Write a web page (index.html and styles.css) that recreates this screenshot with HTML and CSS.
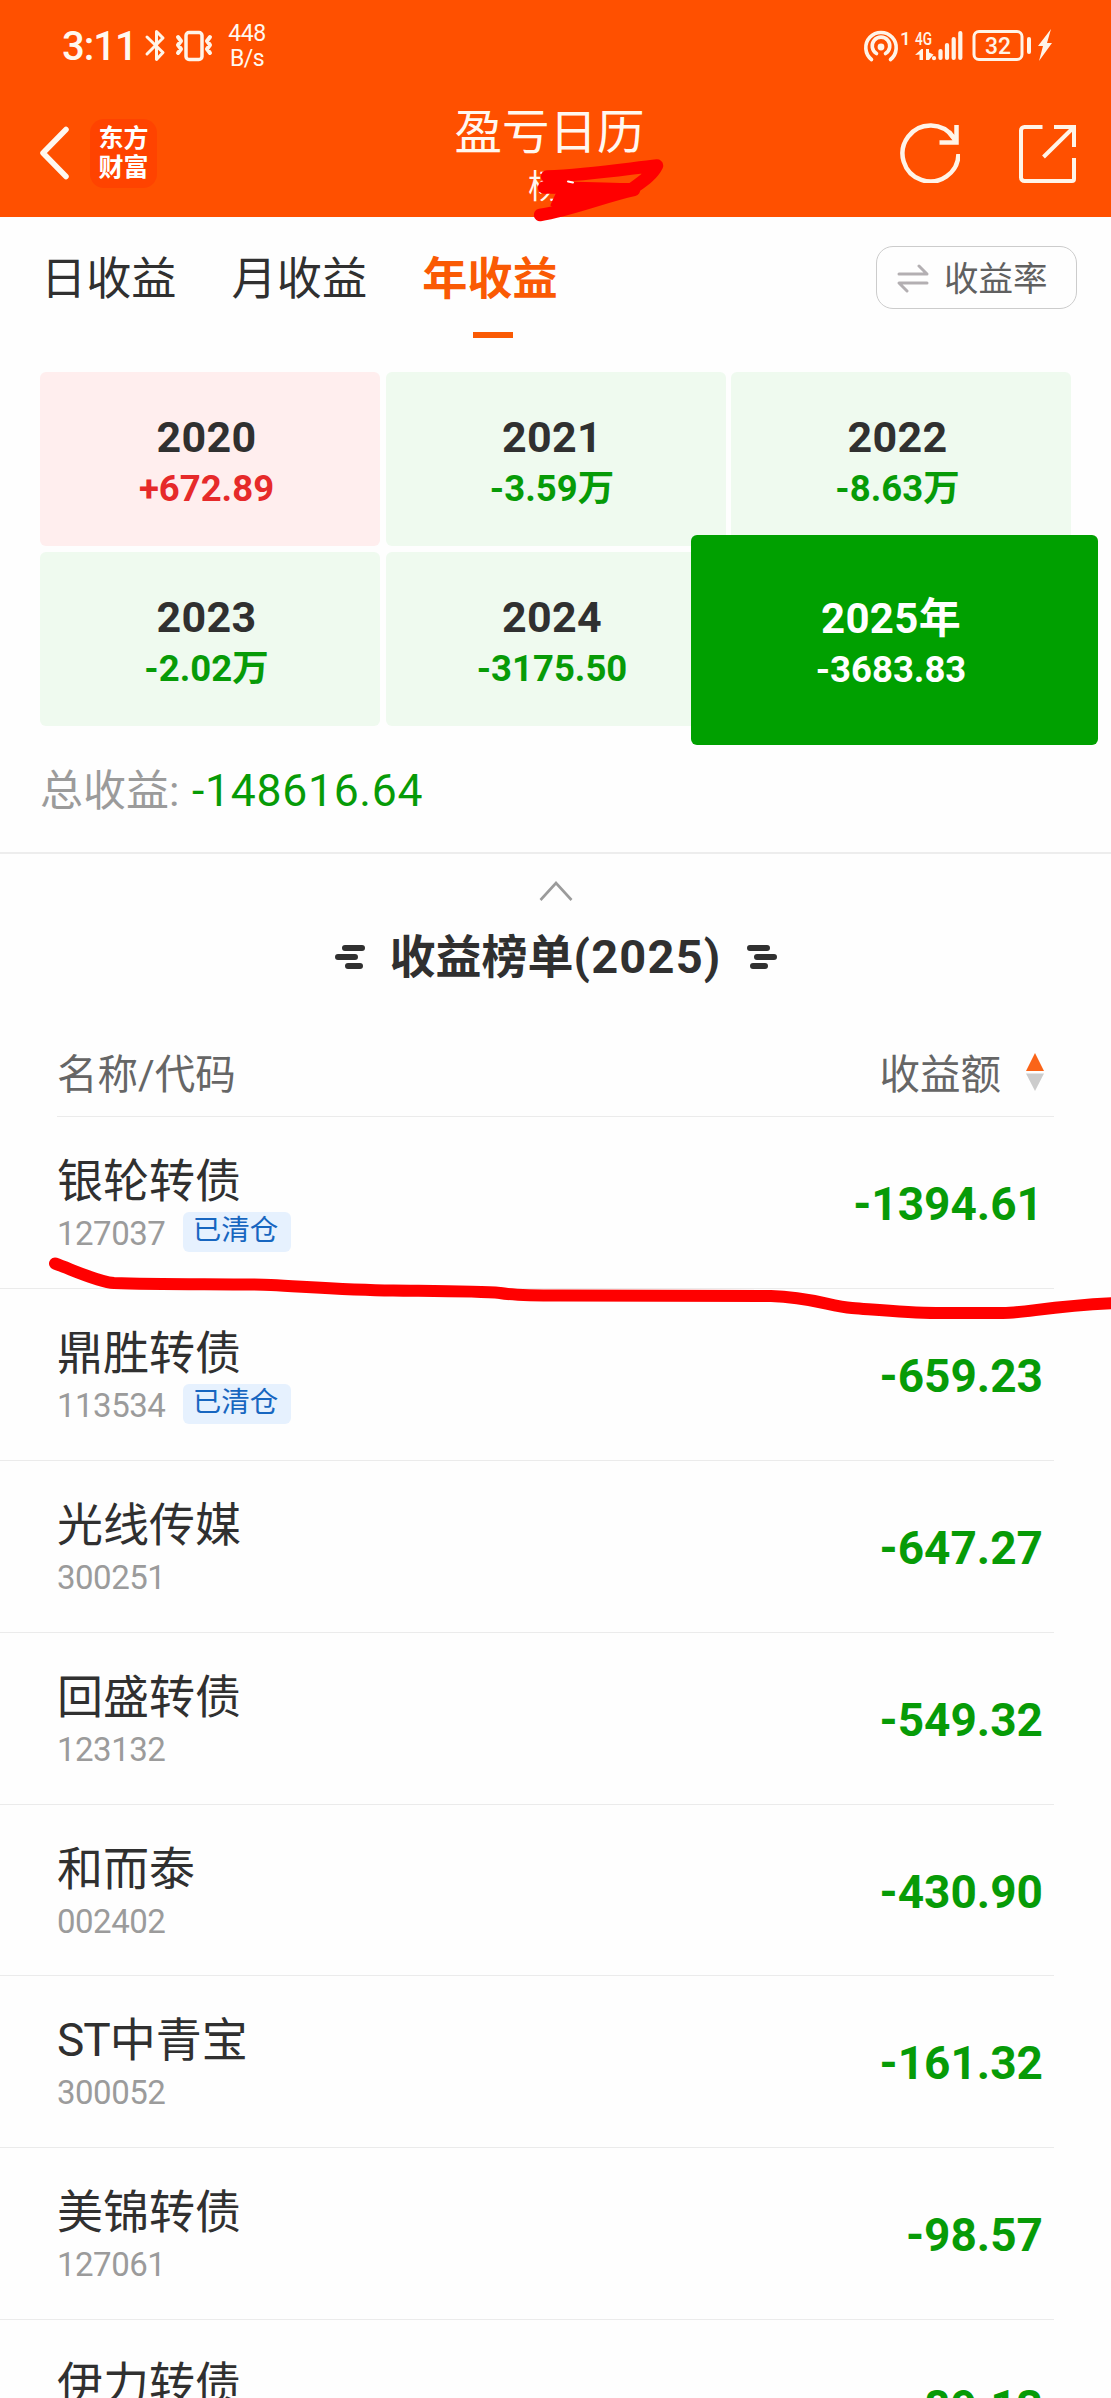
FILE: index.html
```html
<!DOCTYPE html>
<html lang="zh-CN">
<head>
<meta charset="utf-8">
<title>盈亏日历</title>
<link rel="stylesheet" href="styles.css">
</head>
<body>
<header class="top">
  <div class="status">
    <span class="clock">3:11</span>
    <svg class="status-left" width="70" height="34" viewBox="0 0 70 34" fill="none" stroke="#fff4e8" stroke-linecap="round" stroke-linejoin="round">
      <path d="M3 8 19 23.500 12.500 30.500V2.500L19 9 3 25" stroke-width="3"/>
      <rect x="42" y="3.500" width="16" height="27" rx="3" stroke-width="3.500"/>
      <path d="m34 8 3 4-3 4 3 4-3 4M66 8l-3 4 3 4-3 4 3 4" stroke-width="4"/>
    </svg>
    <span class="speed">448<br>B/s</span>
    <svg class="status-right" width="192" height="36" viewBox="0 0 192 36" fill="none" stroke="#fff4e8">
      <path d="M-2.500 31.500a15.200 15.200 0 1 1 19 0M2.500 25.500a8.800 8.800 0 1 1 9 0" stroke-width="3.600" stroke-linecap="round" transform="translate(10)"/>
      <circle cx="17" cy="19" r="3.400" fill="#fff4e8" stroke="none"/>
      <path d="M51 27l6.500-6H59v11h-3.500v-5.500zM62 21h3v3.500l4.500 2L65 32h-3z" fill="#fff4e8" stroke="none"/>
      <g stroke-width="4.200" stroke-linecap="round"><path d="M70 30v.2M76.500 23v7M83 17v13M89.700 11v19M96.300 5v25"/></g>
      <rect x="110" y="3.500" width="48" height="28" rx="5" stroke-width="3"/>
      <path d="M165 11v13" stroke-width="4" stroke-linecap="round"/>
      <path d="M187 1 174 18h5l-4 15 13-18h-5z" fill="#fff4e8" stroke="none"/>
      <g fill="#fff4e8" stroke="none" class="svg-text">
        <text x="36" y="16.500" font-size="19">1</text>
        <text x="51" y="16.500" font-size="19" textLength="17" lengthAdjust="spacingAndGlyphs">4G</text>
        <text x="121" y="26" font-size="24" textLength="26" lengthAdjust="spacingAndGlyphs">32</text>
      </g>
    </svg>
  </div>
  <div class="nav">
    <div class="nav-side">
      <svg width="30" height="54" viewBox="0 0 30 54" fill="none" stroke="#fff8f0" stroke-width="5.500" stroke-linejoin="round" stroke-linecap="round"><path d="M27 3.500 4 27l23 23.500"/></svg>
      <div class="logo">东方<br>财富</div>
    </div>
    <div class="nav-title"><h1>盈亏日历</h1><span class="owner">杨</span></div>
    <div class="nav-side nav-actions">
      <svg width="60" height="60" viewBox="0 0 60 60" fill="none" stroke="#fff4e8" stroke-width="4.500"><path d="M58.500 31a28 28 0 1 1-5-16.500"/><path d="M56.500 2v17.500H39.500M56 18 49 9"/></svg>
      <svg width="58" height="60" viewBox="0 0 58 60" fill="none" stroke="#fff4e8" stroke-width="4"><path d="M23.500 4H5.500a3.500 3.500 0 0 0-3.500 3.500v47A3.500 3.500 0 0 0 5.500 58H53a2 2 0 0 0 2-2V35M35 4h20v20M55 4 24.500 34"/></svg>
    </div>
  </div>
</header>

<section class="summary">
  <div class="tabs">
    <span class="tab">日收益</span><span class="tab">月收益</span><span class="tab active">年收益</span>
    <button class="toggle"><svg width="32" height="30" viewBox="0 0 32 30" fill="none" stroke="#b3afb2" stroke-width="3" stroke-linecap="round" stroke-linejoin="round"><path d="M2 11h28l-8-8M30 20H2l8 8"/></svg><span>收益率</span></button>
  </div>
  <div class="years">
    <div class="year gain"><b>2020</b><i>+672.89</i></div>
    <div class="year"><b>2021</b><i>-3.59万</i></div>
    <div class="year"><b>2022</b><i>-8.63万</i></div>
    <div class="year"><b>2023</b><i>-2.02万</i></div>
    <div class="year"><b>2024</b><i>-3175.50</i></div>
    <div class="year current"><b>2025年</b><i>-3683.83</i></div>
  </div>
  <div class="total">总收益: <span>-148616.64</span></div>
</section>

<section class="ranking">
  <svg class="collapse" width="34" height="22" viewBox="0 0 34 22" fill="none" stroke="#9b9b9b" stroke-width="2.600"><path d="M1.500 20 17 3l15.500 17"/></svg>
  <div class="rank-title">
    <svg width="32" height="24" viewBox="0 0 32 24" stroke="#303030" stroke-width="6" stroke-linecap="round"><path d="M11 3h17M4 12h17M14 21h12"/></svg>
    <h2>收益榜单<span>(2025)</span></h2>
    <svg width="32" height="24" viewBox="0 0 32 24" stroke="#303030" stroke-width="6" stroke-linecap="round"><path d="M4 3h17M11 12h17M7 21h12"/></svg>
  </div>
  <div class="columns"><span>名称/代码</span><span class="sort">收益额<svg width="18" height="38" viewBox="0 0 18 38"><path d="M9 0l9 18H0z" fill="#fa6418"/><path d="M0 20.500h18L9 38z" fill="#ccc"/></svg></span></div>
  <div class="rows">
    <div class="row"><div><p class="name">银轮转债</p><p class="code"><span>127037</span><em>已清仓</em></p></div><span class="amount">-1394.61</span></div>
    <div class="row"><div><p class="name">鼎胜转债</p><p class="code"><span>113534</span><em>已清仓</em></p></div><span class="amount">-659.23</span></div>
    <div class="row"><div><p class="name">光线传媒</p><p class="code"><span>300251</span></p></div><span class="amount">-647.27</span></div>
    <div class="row"><div><p class="name">回盛转债</p><p class="code"><span>123132</span></p></div><span class="amount">-549.32</span></div>
    <div class="row"><div><p class="name">和而泰</p><p class="code"><span>002402</span></p></div><span class="amount">-430.90</span></div>
    <div class="row"><div><p class="name"><span class="latin">ST</span>中青宝</p><p class="code"><span>300052</span></p></div><span class="amount">-161.32</span></div>
    <div class="row"><div><p class="name">美锦转债</p><p class="code"><span>127061</span></p></div><span class="amount">-98.57</span></div>
    <div class="row"><div><p class="name">伊力转债</p></div><span class="amount">-89.13</span></div>
  </div>
</section>

<svg class="marks" width="1111" height="2398" viewBox="0 0 1111 2398" fill="none" stroke="#f00" stroke-linecap="round" stroke-linejoin="round">
  <path d="M547 176.500C590 175 632 168 657 165.500C652 176 640 183 632 189C600 190 575 187 544 187.500M634 190C602 197 572 210 540 215" stroke-width="12.500"/>
  <path d="M560 187 634 190 560 209 552 205z" fill="#f00" stroke-width="3"/>
  <path d="M568 181.500l5 1" stroke="#fff" stroke-width="2"/>
  <path d="M55 1263.500C73 1270 98 1282 114 1283C165 1285 235 1283.500 271 1285C310 1287 350 1290 393 1290.500C430 1291 480 1291 500 1293C515 1295.500 540 1295.500 560 1295.500L771 1296C810 1297 830 1306 852 1308C890 1311 910 1313 936 1313H1003C1025 1313 1050 1306 1115 1303" stroke-width="12"/>
</svg>
</body>
</html>
```

FILE: styles.css
```css
* { box-sizing: border-box; margin: 0; padding: 0; }
body {
  position: relative;
  width: 1111px;
  height: 2398px;
  overflow: hidden;
  background: #fefefe;
  color: #303030;
  font-family: Roboto, "Noto Sans CJK SC", sans-serif;
}
svg { display: block; flex: none; }

.top { height: 217px; background: #ff5000; color: #fff8f0; }
.status { display: flex; height: 92px; padding: 0 55px 0 62px; align-items: center; }
.clock { width: 82px; font-size: 40px; font-weight: 500; letter-spacing: -1px; }
.speed { margin-left: 10px; width: 46px; text-align: center; font-size: 23px; line-height: 25px; letter-spacing: -.5px; }
.status-right { margin-left: auto; overflow: visible; }
.svg-text { font-weight: 500; }
.nav { display: flex; height: 125px; padding: 0 34px 0 39px; justify-content: space-between; }
.nav-side { display: flex; width: 260px; height: 122px; align-items: center; gap: 21px; }
.nav-actions { justify-content: flex-end; gap: 59px; }
.logo { width: 67px; height: 69px; padding-top: 5px; border-radius: 14px; background: #ff4300; color: #fff; font-size: 25px; font-weight: 700; line-height: 29px; text-align: center; }
.nav-title { display: flex; flex-direction: column; align-items: center; margin-right: 17px; padding-top: 10px; }
.nav-title h1 { font-size: 47.500px; font-weight: 400; line-height: 62px; }
.owner { margin-left: -10px; font-size: 33px; line-height: 46px; }

.summary { height: 637px; padding: 0 40px; border-bottom: 2px solid #ededed; }
.tabs { display: flex; height: 155px; padding: 29px 0 0 1px; gap: 55px; margin-right: -6px; }
.tab { position: relative; height: 60px; padding-top: 4px; font-size: 45.200px; line-height: 60px; }
.active { color: #fa5a04; font-weight: 700; }
.active::after { content: ""; position: absolute; left: 51px; top: 86px; width: 40px; height: 6px; background: #fa5a04; }
.toggle { display: flex; align-items: center; gap: 15px; width: 201px; height: 63px; margin-left: auto; padding-left: 20px; border: 1px solid #ccc; border-radius: 17px; background: none; color: #606060; font: inherit; font-size: 34.500px; line-height: 50px; }
.toggle span { padding-top: 3px; }
.years { display: grid; grid-template-columns: repeat(3, 340px); grid-auto-rows: 174px; gap: 6px 5.500px; }
.year { display: flex; flex-direction: column; align-items: center; justify-content: center; padding: 7px 7px 0 0; border-radius: 6px; background: #effaef; color: #079b07; }
.year b { color: #303030; font-size: 43px; line-height: 51px; letter-spacing: .3px; }
.year i { font-size: 36.500px; font-style: normal; font-weight: 700; line-height: 51px; }
.gain { background: #ffeeee; color: #e62a2a; }
.current { z-index: 1; margin: -17px -27px -19px -40px; background: #00a000; color: #fff; }
.current b { color: #fff; font-size: 42px; }
.total { padding: 35px 0 0; color: #9b9b9b; font-size: 43px; line-height: 60px; }
.total span { margin-left: 2px; color: #079b07; font-size: 44.500px; letter-spacing: .7px; }

.ranking { padding-top: 26px; }
.collapse { margin: 0 auto; }
.rank-title { display: flex; align-items: center; justify-content: center; gap: 24px; height: 110px; }
.rank-title h2 { padding-bottom: 1px; font-size: 46px; font-weight: 700; line-height: 60px; }
.rank-title h2 span { font-size: 47px; letter-spacing: 1.200px; }
.columns { display: flex; justify-content: space-between; align-items: center; height: 86px; width: 997px; margin: 19px 0 0 57px; padding: 0 10px 4px 0; border-bottom: 1px solid #ebebeb; color: #666; font-size: 40.500px; }
.sort { display: flex; align-items: center; gap: 25px; }
.row { display: flex; justify-content: space-between; width: 1054px; height: 171.900px; padding: 33px 11px 0 57px; border-bottom: 1.500px solid #ebebeb; }
.name { font-size: 46px; line-height: 62px; }
.latin { letter-spacing: -1px; }
.code { display: flex; height: 40px; color: #9b9b9b; font-size: 33px; line-height: 44px; letter-spacing: -.5px; }
.code span { width: 126px; }
.code em { width: 108px; height: 40px; padding-right: 3px; border-radius: 6px; background: #e6f1fe; color: #1766c0; font-size: 28.500px; font-style: normal; line-height: 38px; letter-spacing: 0; text-align: center; }
.amount { color: #079b07; font-size: 46px; font-weight: 700; line-height: 108px; }

.marks { position: absolute; left: 0; top: 0; z-index: 2; pointer-events: none; }
```
